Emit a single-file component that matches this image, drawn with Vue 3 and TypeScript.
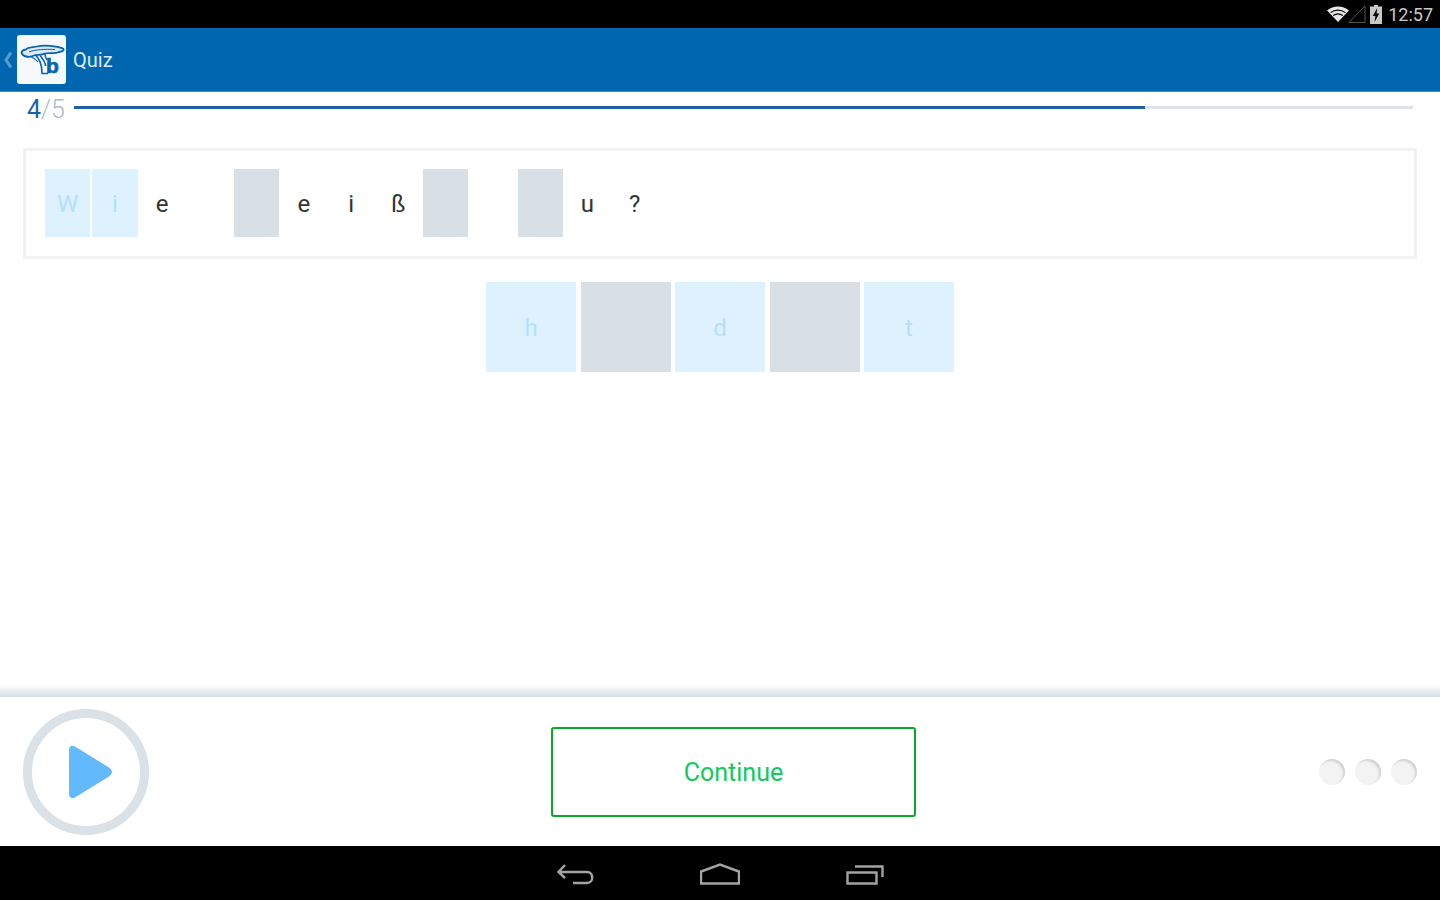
<template>
  <div class="screen">
    <div class="status-bar">
      <svg class="wifi" width="22" height="16" viewBox="0 0 22 16">
        <path d="M11 16L0 4.5C6 -1 16 -1 22 4.5Z" fill="#e6e6e6" />
        <path d="M3.6 6.6C8 3.2 14 3.2 18.4 6.6M6.2 9.6C9 7.6 13 7.6 15.8 9.6" stroke="#000" stroke-width="1.2" fill="none" />
      </svg>
      <svg class="signal" width="18" height="18" viewBox="0 0 18 18">
        <path d="M17 1V17.5H0.8Z" fill="none" stroke="#555" stroke-width="1" />
      </svg>
      <svg class="battery" width="12" height="19" viewBox="0 0 12 19">
        <path d="M4 0H8V1.5H12V19H0V1.5H4Z" fill="#c8c8c8" />
        <path d="M7.2 3L2.8 11H5.4L4.6 17L9.2 8.5H6.6Z" fill="#000" />
      </svg>
      <span class="clock">12:57</span>
    </div>

    <header class="app-bar">
      <svg class="chevron" width="10" height="18" viewBox="0 0 10 18">
        <path d="M8 1.5L3 9L8 16.5" fill="none" stroke="#5b9ccd" stroke-width="3" />
      </svg>
      <div class="logo">
        <svg width="49" height="49" viewBox="0 0 49 49">
          <path d="M6 20C3 17.5 5 15 9 14.5C11 12 17 12.5 20 11.5C27 9.5 40 11 46 13.5C48 15 45 17 42 17C38 19 32 17.5 28 18.5C25 20.5 20 19.5 17 20.5C13 22.5 8 22 6 20Z" fill="#d9e9f5" stroke="#0a63ae" stroke-width="1.8" />
          <path d="M12 17C18 14.5 28 14 38 14.5" fill="none" stroke="#0a63ae" stroke-width="1" />
          <path d="M19 20.5C22 24 25 28 25 38.5H31M23 20.5C26 24 28.5 27 28.5 31M28 18.5C28 21 28.5 23 30 25" fill="none" stroke="#0a63ae" stroke-width="1.6" />
          <path d="M13 21C16 23 19 24 21 27" fill="none" stroke="#0a63ae" stroke-width="1.2" />
          <text x="29" y="38" class="logo-b">b</text>
        </svg>
      </div>
      <span class="title">Quiz</span>
    </header>

    <main class="content">
      <div class="progress-row">
        <span class="counter"><b>4</b>/5</span>
        <div class="track"><div class="fill" :style="{ width: progress + '%' }"></div></div>
      </div>

      <section class="question">
        <div
          v-for="(cell, index) in cells"
          :key="index"
          class="cell"
          :class="cell.kind"
        >
          {{ cell.text }}
        </div>
      </section>

      <div class="answers">
        <div
          v-for="(tile, index) in tiles"
          :key="index"
          class="tile"
          :class="tile ? 'blue' : 'grey'"
        >
          {{ tile }}
        </div>
      </div>
    </main>

    <footer class="bottom">
      <button class="play" type="button">
        <svg width="46" height="56" viewBox="0 0 46 56">
          <path d="M8 2.5L42 23.5Q48 28 42 32.5L8 53.5Q2 56 2 49V7Q2 0 8 2.5Z" fill="#62b9fb" />
        </svg>
      </button>
      <button class="continue" type="button">Continue</button>
      <div class="dots">
        <span v-for="n in 3" :key="n" class="dot"></span>
      </div>
    </footer>

    <nav class="nav-bar">
      <svg width="38" height="22" viewBox="0 0 38 22">
        <path d="M9 2L2.5 9L9 15M2.5 9H31C38 9 38 20 31 20H17" fill="none" stroke="#a3a3a3" stroke-width="2.4" />
      </svg>
      <svg width="40" height="22" viewBox="0 0 40 22">
        <path d="M1 20.5V8.5L20 1.5L39 8.5V20.5Z" fill="none" stroke="#a3a3a3" stroke-width="2.4" />
      </svg>
      <svg width="38" height="22" viewBox="0 0 38 22">
        <path d="M1.5 9.5H30.5V20.5H1.5Z" fill="none" stroke="#a3a3a3" stroke-width="2.4" />
        <path d="M9 3.5H36.5V14" fill="none" stroke="#a3a3a3" stroke-width="2.4" />
      </svg>
    </nav>
  </div>
</template>

<script setup lang="ts">
type Cell = {
  text: string;
  kind: "done" | "plain" | "gap";
};

const progress = 80;

const cells: Cell[] = [
  { text: "W", kind: "done" },
  { text: "i", kind: "done" },
  { text: "e", kind: "plain" },
  { text: "", kind: "plain" },
  { text: "", kind: "gap" },
  { text: "e", kind: "plain" },
  { text: "i", kind: "plain" },
  { text: "ß", kind: "plain" },
  { text: "", kind: "gap" },
  { text: "", kind: "plain" },
  { text: "", kind: "gap" },
  { text: "u", kind: "plain" },
  { text: "?", kind: "plain" },
];

const tiles = ["h", "", "d", "", "t"];
</script>

<style>
html,
body {
  margin: 0;
  background: #fff;
}
</style>

<style scoped>
.screen {
  width: 1440px;
  height: 900px;
  display: flex;
  flex-direction: column;
  overflow: hidden;
  font-family: Roboto, "Liberation Sans", sans-serif;
}

.status-bar {
  height: 28px;
  background: #000;
  display: flex;
  align-items: center;
  justify-content: flex-end;
  padding-right: 7px;
  box-sizing: border-box;
}
.wifi {
  margin-right: -1px;
}
.signal {
  margin-right: 4px;
}
.battery {
  margin-right: 6px;
}
.clock {
  color: #c8c8c8;
  font-size: 18px;
}

.app-bar {
  height: 64px;
  background: #0066b0;
  border-bottom: 1px solid #3b87c0;
  box-sizing: border-box;
  display: flex;
  align-items: center;
  padding-left: 3px;
}
.logo {
  width: 49px;
  height: 49px;
  margin-left: 4px;
  background: #f6f9fc;
  border-radius: 3px;
  display: flex;
}
.logo-b {
  font-family: "Liberation Sans", sans-serif;
  font-size: 21px;
  font-weight: 700;
  fill: #0a63ae;
  stroke: #0a63ae;
  stroke-width: 0.7px;
}
.title {
  margin-left: 7px;
  padding-top: 1px;
  color: #dfeaf4;
  font-size: 20px;
}

.content {
  flex: 1;
  display: flex;
  flex-direction: column;
  min-height: 0;
  background: linear-gradient(#fff calc(100% - 13px), #f7f9fa calc(100% - 10px), #d6dde3);
}
.progress-row {
  display: flex;
  align-items: center;
  height: 36px;
  padding: 0 27px;
}
.counter {
  width: 47px;
  flex-shrink: 0;
  margin-bottom: 2px;
  color: #a9bccd;
  font-size: 25px;
  font-weight: 300;
}
.counter b {
  color: #1a62b0;
  font-weight: 400;
}
.track {
  flex: 1;
  height: 3px;
  margin-bottom: 6px;
  background: #dde3e8;
}
.fill {
  height: 100%;
  background: #1f5fa8;
}

.question {
  margin: 20px 23px 0;
  height: 111px;
  box-sizing: border-box;
  border: 3px solid #f2f2f2;
  padding: 18px 19px;
  display: flex;
  gap: 2px;
}
.cell {
  width: 45.25px;
  height: 68px;
  box-sizing: border-box;
  padding-top: 2px;
  display: flex;
  align-items: center;
  justify-content: center;
  color: #333;
  font-size: 24px;
}
.cell.done {
  background: #def1ff;
  color: #b4e0ff;
}
.cell.gap {
  background: #d8dfe5;
}

.answers {
  margin-top: 23px;
  display: flex;
  justify-content: center;
  gap: 4.5px;
}
.tile {
  width: 90px;
  height: 90px;
  box-sizing: border-box;
  padding-top: 2px;
  display: flex;
  align-items: center;
  justify-content: center;
  font-size: 24px;
}
.tile.blue {
  background: #def1ff;
  color: #b4e0ff;
}
.tile.grey {
  background: #d8dfe5;
}

.bottom {
  height: 149px;
  flex-shrink: 0;
  background: #fff;
  display: flex;
  align-items: center;
  padding: 0 23px 0 22.5px;
  box-sizing: border-box;
}
.play {
  width: 126px;
  height: 126px;
  box-sizing: border-box;
  border: 9px solid #dae1e7;
  border-radius: 50%;
  background: #fff;
  padding: 0 0 0 8px;
  display: flex;
  align-items: center;
  justify-content: center;
}
.continue {
  width: 365px;
  height: 90px;
  margin-left: 402.5px;
  padding-top: 3px;
  box-sizing: border-box;
  border: 2px solid #0ba82b;
  border-radius: 3px;
  background: #fff;
  color: #12c95c;
  font-family: inherit;
  font-size: 25px;
}
.dots {
  margin-left: auto;
  display: flex;
  gap: 10px;
}
.dot {
  width: 26px;
  height: 26px;
  border-radius: 50%;
  background: #f3f3f3;
  box-shadow: inset -2px 2px 2px #d4d4d4;
}

.nav-bar {
  height: 54px;
  flex-shrink: 0;
  background: #000;
  display: flex;
  align-items: center;
  justify-content: center;
  gap: 106px;
  padding-top: 1px;
  box-sizing: border-box;
}
</style>
